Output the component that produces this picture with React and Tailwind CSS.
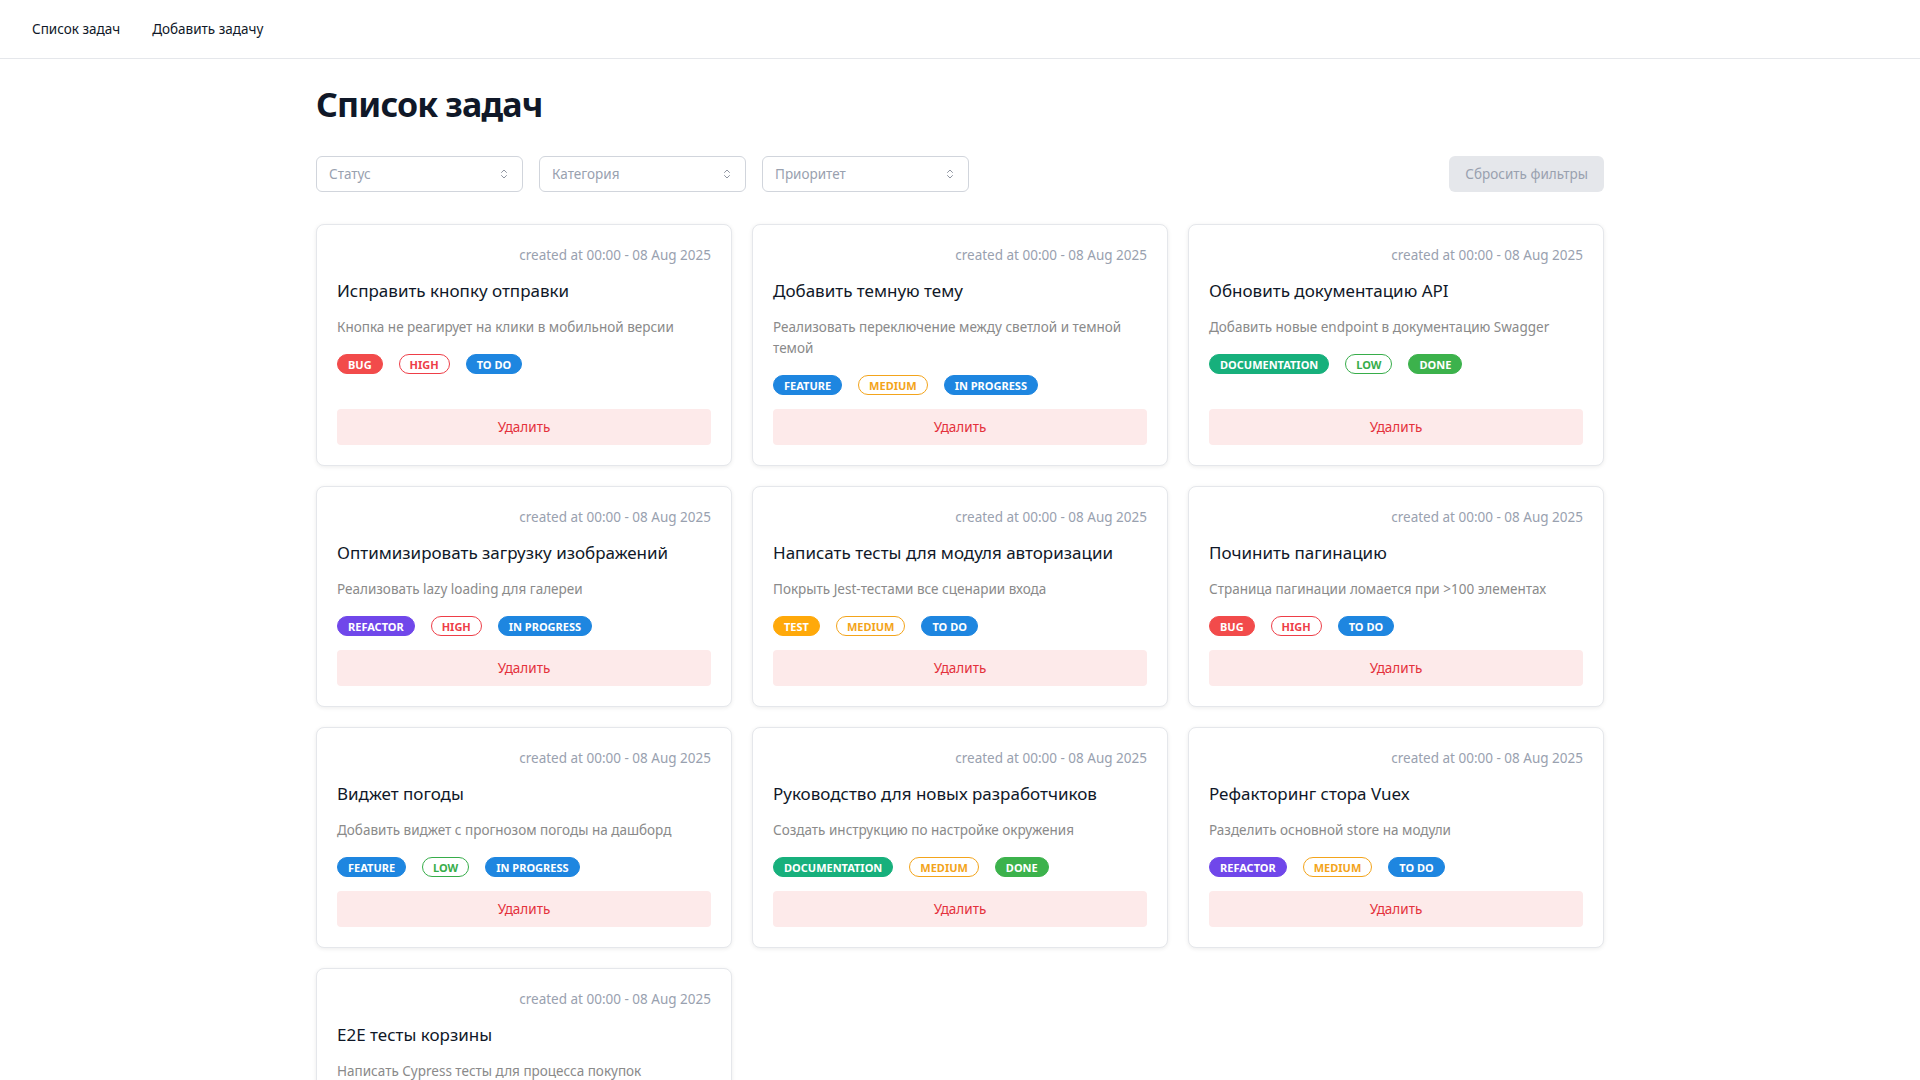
import React from "react";
import { ChevronsUpDown } from "lucide-react";

const TAG = {
  BUG: "bg-[#f24b4b] text-white border-[#f24b4b]",
  FEATURE: "bg-[#1e86e0] text-white border-[#1e86e0]",
  DOCUMENTATION: "bg-[#17b07c] text-white border-[#17b07c]",
  REFACTOR: "bg-[#7047ea] text-white border-[#7047ea]",
  TEST: "bg-[#ffa90a] text-white border-[#ffa90a]",
  HIGH: "bg-white text-[#ee3e48] border-[#ee3e48]",
  MEDIUM: "bg-white text-[#f3a41b] border-[#f3a41b]",
  LOW: "bg-white text-[#37ad4a] border-[#37ad4a]",
  "TO DO": "bg-[#1e86e0] text-white border-[#1e86e0]",
  "IN PROGRESS": "bg-[#1e86e0] text-white border-[#1e86e0]",
  DONE: "bg-[#3cb24c] text-white border-[#3cb24c]",
};

const tasks = [
  { title: "Исправить кнопку отправки", text: "Кнопка не реагирует на клики в мобильной версии", tags: ["BUG", "HIGH", "TO DO"] },
  { title: "Добавить темную тему", text: "Реализовать переключение между светлой и темной темой", tags: ["FEATURE", "MEDIUM", "IN PROGRESS"] },
  { title: "Обновить документацию API", text: "Добавить новые endpoint в документацию Swagger", tags: ["DOCUMENTATION", "LOW", "DONE"] },
  { title: "Оптимизировать загрузку изображений", text: "Реализовать lazy loading для галереи", tags: ["REFACTOR", "HIGH", "IN PROGRESS"] },
  { title: "Написать тесты для модуля авторизации", text: "Покрыть Jest-тестами все сценарии входа", tags: ["TEST", "MEDIUM", "TO DO"] },
  { title: "Починить пагинацию", text: "Страница пагинации ломается при >100 элементах", tags: ["BUG", "HIGH", "TO DO"] },
  { title: "Виджет погоды", text: "Добавить виджет с прогнозом погоды на дашборд", tags: ["FEATURE", "LOW", "IN PROGRESS"] },
  { title: "Руководство для новых разработчиков", text: "Создать инструкцию по настройке окружения", tags: ["DOCUMENTATION", "MEDIUM", "DONE"] },
  { title: "Рефакторинг стора Vuex", text: "Разделить основной store на модули", tags: ["REFACTOR", "MEDIUM", "TO DO"] },
  { title: "E2E тесты корзины", text: "Написать Cypress тесты для процесса покупок", tags: ["TEST", "HIGH", "TO DO"] },
];

function Select({ label }) {
  return (
    <div className="w-[207px] h-9 border border-gray-300 rounded-md flex items-center justify-between px-3 text-[13.5px] text-gray-400 bg-white">
      <span>{label}</span>
      <ChevronsUpDown size={12} strokeWidth={1.5} className="text-gray-500" />
    </div>
  );
}

function TaskCard({ task }) {
  return (
    <div className="bg-white border border-gray-200 rounded-lg shadow-[0_1px_4px_rgba(0,0,0,0.08)] p-5 flex flex-col">
      <div className="text-[13.5px] leading-5 text-gray-400 text-right">created at 00:00 - 08 Aug 2025</div>
      <h3 className="mt-3 text-[17px] leading-7 text-gray-900">{task.title}</h3>
      <p className="mt-3 text-[13.5px] leading-[21px] text-[#8a8a8a]">{task.text}</p>
      <div className="mt-4 mb-[14px] flex items-center gap-4">
        {task.tags.map((t, i) => (
          <span key={i} className={`h-5 px-2.5 rounded-full border text-[11px] font-bold leading-none flex items-center ${TAG[t]}`}>
            {t}
          </span>
        ))}
      </div>
      <button className="mt-auto h-9 w-full rounded-sm bg-[#fdeaea] text-[13.5px] text-[#e4313b]">
        Удалить
      </button>
    </div>
  );
}

export default function App() {
  return (
    <div className="min-h-screen bg-white font-['Noto_Sans',sans-serif] text-gray-900">
      <header className="h-[59px] border-b border-gray-200 flex items-center px-8 gap-8 text-[13.5px]">
        <a className="text-gray-900">Список задач</a>
        <a className="text-gray-900">Добавить задачу</a>
      </header>

      <main className="w-[1288px] mx-auto pt-[25px] pb-10">
        <h1 className="text-[34px] leading-10 font-bold tracking-tight">Список задач</h1>

        <div className="mt-8 flex items-center gap-4">
          <Select label="Статус" />
          <Select label="Категория" />
          <Select label="Приоритет" />
          <button className="ml-auto h-9 px-4 rounded-md bg-gray-200 text-[13.5px] text-gray-400">Сбросить фильтры</button>
        </div>

        <div className="mt-8 grid grid-cols-3 gap-5">
          {tasks.map((t, i) => (
            <TaskCard key={i} task={t} />
          ))}
        </div>
      </main>
    </div>
  );
}
